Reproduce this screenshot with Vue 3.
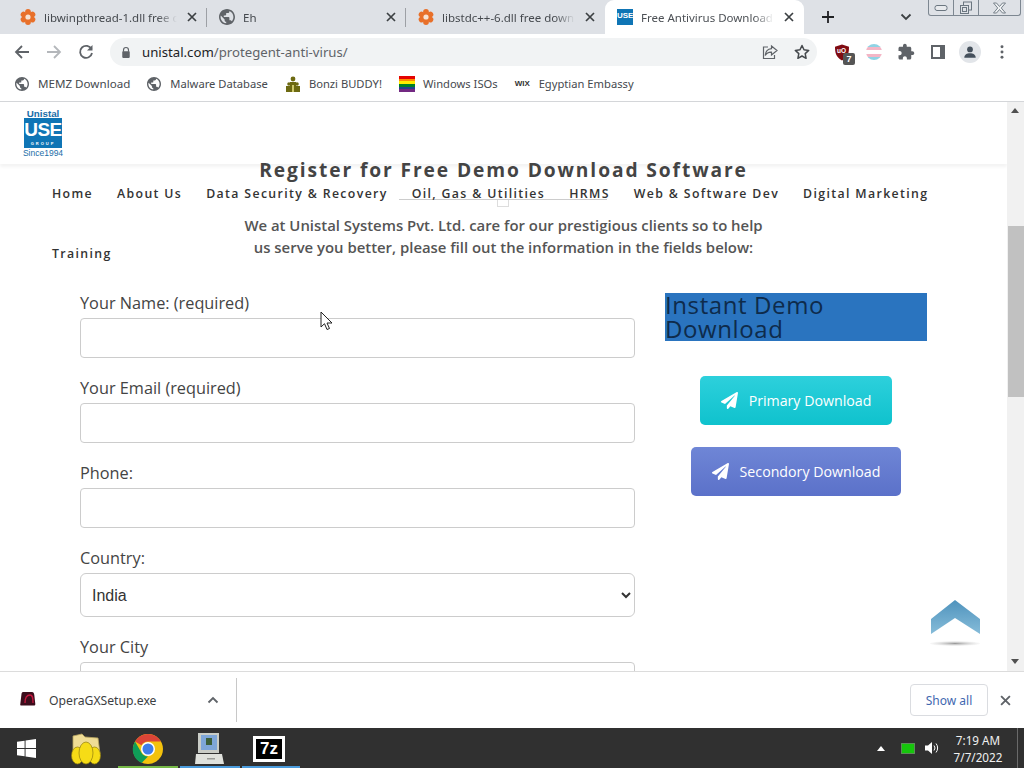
<script setup>
const globe = 'M12 2C6.48 2 2 6.48 2 12s4.48 10 10 10 10-4.48 10-10S17.52 2 12 2zm-1 17.93c-3.95-.49-7-3.85-7-7.93 0-.62.08-1.21.21-1.79L9 15v1c0 1.1.9 2 2 2v1.93zm6.9-2.54c-.26-.81-1-1.39-1.9-1.39h-1v-3c0-.55-.45-1-1-1H8v-2h2c.55 0 1-.45 1-1V7h2c1.1 0 2-.9 2-2v-.41c2.93 1.19 5 4.06 5 7.41 0 2.08-.8 3.97-2.1 5.39z'
const plane = 'M476 3.2L12.5 270.6c-18.1 10.4-15.8 35.6 2.2 43.2L121 358.4l287.3-253.2c5.5-4.9 13.3 2.6 8.6 8.3L176 407v80.5c0 23.6 28.5 32.9 42.5 15.8L282 426l124.6 52.2c14.2 6 30.4-2.9 33-18.2l72-432C515 7.8 493.3-6.8 476 3.2z'
const tabs = [
  { title: 'libwinpthread-1.dll free download', icon: 'dll' },
  { title: 'Eh', icon: 'globe' },
  { title: 'libstdc++-6.dll free download', icon: 'dll' },
  { title: 'Free Antivirus Download for PC', icon: 'use', active: true }
]
const petals = [0, 60, 120, 180, 240, 300]
const nav = ['Home', 'About Us', 'Data Security & Recovery', 'Oil, Gas & Utilities', 'HRMS', 'Web & Software Dev', 'Digital Marketing', 'Training']
const fields = [
  { label: 'Your Name: (required)' },
  { label: 'Your Email (required)' },
  { label: 'Phone:' }
]
</script>

<template>
  <div class="screen">
    <header class="tabstrip">
      <div v-for="t in tabs" :key="t.title" class="tab" :class="{ active: t.active }">
        <svg v-if="t.icon === 'dll'" class="fav" viewBox="0 0 16 16">
          <g fill="#e8702a">
            <circle v-for="a in petals" :key="a" cx="8" cy="2.9" r="2.9" :transform="`rotate(${a} 8 8)`" />
            <circle cx="8" cy="8" r="4.6" />
          </g>
          <circle cx="8" cy="8" r="2.6" fill="#f6e3d4" />
        </svg>
        <svg v-else-if="t.icon === 'globe'" class="fav" viewBox="2 2 20 20"><path :d="globe" fill="#5f6368" /></svg>
        <span v-else class="fav favuse">USE</span>
        <span class="tabtitle">{{ t.title }}</span>
        <svg class="tabx" viewBox="0 0 10 10"><path d="M1 1l8 8M9 1l-8 8" stroke="#3c4043" stroke-width="1.7" /></svg>
      </div>
      <svg class="newtab" viewBox="0 0 12 12"><path d="M6 0v12M0 6h12" stroke="#202124" stroke-width="1.8" /></svg>
      <svg class="tabmenu" viewBox="0 0 12 8"><path d="M1.5 1.5L6 6l4.500-4.500" fill="none" stroke="#3c4043" stroke-width="1.8" /></svg>
      <div class="winctl">
        <span class="winbtn"><svg viewBox="0 0 14 8" width="14" height="8"><rect x="1" y="1.500" width="12" height="5" rx="2" fill="#e8eaed" stroke="#6b7680" /></svg></span>
        <span class="winbtn"><svg viewBox="0 0 14 14" width="14" height="14"><rect x="4.500" y="1" width="8" height="8" fill="none" stroke="#6b7680" /><rect x="1.500" y="4.500" width="8" height="8" fill="#dee1e6" stroke="#6b7680" /><rect x="3.500" y="6.500" width="4" height="4" fill="none" stroke="#6b7680" /></svg></span>
        <span class="winbtn wide"><svg viewBox="0 0 14 12" width="15" height="12"><path d="M1 1h3l3 3.500L10 1h3L8.800 6 13 11h-3L7 7.500 4 11H1l4.200-5z" fill="#eef0f2" stroke="#6b7680" stroke-width=".9" /></svg></span>
      </div>
    </header>

    <div class="toolbar">
      <svg class="navicon" viewBox="0 0 16 16"><path d="M15 8H2M8 2L2 8l6 6" fill="none" stroke="#5f6368" stroke-width="1.800" /></svg>
      <svg class="navicon" viewBox="0 0 16 16"><path d="M1 8h13M8 2l6 6-6 6" fill="none" stroke="#b4b7bb" stroke-width="1.800" /></svg>
      <svg class="navicon" viewBox="0 0 16 16"><path d="M13.500 5.200A6 6 0 1 0 14 9" fill="none" stroke="#5f6368" stroke-width="1.800" /><path d="M14.500 1v5.500H9z" fill="#5f6368" /></svg>
      <div class="omnibox">
        <svg class="lock" viewBox="0 0 12 14"><path d="M3 6V4a3 3 0 0 1 6 0v2" fill="none" stroke="#5f6368" stroke-width="1.400" /><rect x="1.500" y="5.500" width="9" height="8" rx="1" fill="#5f6368" /></svg>
        <span class="url"><b>unistal.com</b>/protegent-anti-virus/</span>
        <svg class="omni-i share" viewBox="0 0 16 16"><path d="M9.500 2l5.500 4.500L9.500 11V8.200C6.500 8 4.500 9.300 3.200 11.500 3.500 7.500 5.500 5 9.500 4.600z" fill="none" stroke="#5f6368" stroke-width="1.200" /><path d="M6 3H1.500v11.500h11V11" fill="none" stroke="#5f6368" stroke-width="1.200" /></svg>
        <svg class="omni-i star" viewBox="0 0 16 16"><path d="M8 1.500l2 4.300 4.700.6-3.500 3.200.9 4.700L8 12l-4.100 2.300.9-4.700L1.300 6.400 6 5.800z" fill="none" stroke="#45494d" stroke-width="1.500" stroke-linejoin="round" /></svg>
      </div>
      <div class="ext">
        <div class="ublock">
          <svg viewBox="0 0 16 17" width="16" height="17"><path d="M8 .5l7 2.200c0 6-1 10.500-7 13.800C2 13.200 1 8.700 1 2.700z" fill="#800b12" /></svg>
          <span class="uo">uO</span>
          <span class="ubadge">7</span>
        </div>
      </div>
      <div class="ext gap"><span class="trans"></span></div>
      <div class="ext"><svg viewBox="0 0 24 24" width="18" height="18"><path d="M20.500 11H19V7c0-1.100-.9-2-2-2h-4V3.500C13 2.120 11.880 1 10.500 1S8 2.120 8 3.500V5H4c-1.100 0-1.990.9-1.990 2v3.800H3.500c1.490 0 2.700 1.210 2.700 2.700s-1.210 2.700-2.700 2.700H2V20c0 1.100.9 2 2 2h3.800v-1.500c0-1.490 1.210-2.700 2.700-2.700 1.490 0 2.700 1.210 2.700 2.700V22H17c1.100 0 2-.9 2-2v-4h1.500c1.380 0 2.500-1.120 2.500-2.500S21.880 11 20.500 11z" fill="#5f6368" /></svg></div>
      <div class="ext"><span class="sidepanel"></span></div>
      <div class="ext">
        <span class="avatar"><svg viewBox="0 0 16 16" width="14" height="14"><circle cx="8" cy="5" r="3.300" fill="#45505c" /><path d="M1.500 14.500c0-3.500 3-5 6.500-5s6.500 1.500 6.500 5z" fill="#45505c" /></svg></span>
      </div>
      <div class="ext"><svg viewBox="0 0 4 16" width="4" height="14"><g fill="#5f6368"><circle cx="2" cy="2" r="1.700" /><circle cx="2" cy="8" r="1.700" /><circle cx="2" cy="14" r="1.700" /></g></svg></div>
    </div>

    <nav class="bookmarks">
      <span class="bm"><svg class="bmi" viewBox="2 2 20 20"><path :d="globe" fill="#5f6368" /></svg>MEMZ Download</span>
      <span class="bm"><svg class="bmi" viewBox="2 2 20 20"><path :d="globe" fill="#5f6368" /></svg>Malware Database</span>
      <span class="bm">
        <svg class="bmi big" viewBox="0 0 16 16"><g fill="#6d6a12"><circle cx="8" cy="3" r="2.400" /><path d="M5 6h6v4H5z" /><circle cx="4" cy="8" r="1.800" /><circle cx="12" cy="8" r="1.800" /><path d="M1 10h6v6H1zM9 10h6v6H9z" /></g><path d="M7 9h2v7H7z" fill="#cfc96a" /></svg>
        Bonzi BUDDY!
      </span>
      <span class="bm"><span class="rainbow"></span>Windows ISOs</span>
      <span class="bm"><span class="wix">WIX</span>Egyptian Embassy</span>
    </nav>

    <div class="viewport">
      <main class="page">
        <div class="site-head">
          <div class="logo">
            <span class="logo-top">Unistal</span>
            <div class="logo-box">
              <span class="logo-use">USE</span>
              <span class="logo-group">GROUP</span>
            </div>
            <span class="logo-since">Since1994</span>
          </div>
        </div>

        <div class="site-nav">
          <a v-for="n in nav" :key="n">{{ n }}</a>
        </div>
        <div class="navline"><span class="navbox"></span></div>

        <section class="content">
          <h1>Register for Free Demo Download Software</h1>
          <p class="intro">We at Unistal Systems Pvt. Ltd. care for our prestigious clients so to help<br />us serve you better, please fill out the information in the fields below:</p>
          <div class="columns">
            <form class="form" @submit.prevent>
              <label v-for="f in fields" :key="f.label" class="group">
                <span>{{ f.label }}</span>
                <input type="text" />
              </label>
              <label class="group">
                <span>Country:</span>
                <select><option>India</option></select>
              </label>
              <label class="group">
                <span>Your City</span>
                <input type="text" />
              </label>
            </form>
            <aside class="side">
              <h2>Instant Demo Download</h2>
              <a class="btn primary"><svg viewBox="0 0 512 512"><path :d="plane" fill="#fff" /></svg>Primary Download</a>
              <a class="btn secondary"><svg viewBox="0 0 512 512"><path :d="plane" fill="#fff" /></svg>Secondory Download</a>
            </aside>
          </div>
        </section>

        <div class="totop">
          <svg viewBox="0 0 50 46" width="50" height="46">
            <defs>
              <linearGradient id="tg" x1="0" y1="0" x2="0" y2="1"><stop offset="0" stop-color="#4f93bd" /><stop offset="1" stop-color="#86bcd9" /></linearGradient>
              <radialGradient id="ts"><stop offset="0" stop-color="#999" /><stop offset="1" stop-color="#ddd" stop-opacity=".2" /></radialGradient>
            </defs>
            <path d="M25 0L50 19v15L25 18 1 34V19z" fill="url(#tg)" />
            <ellipse cx="25" cy="43.500" rx="25" ry="2.500" fill="url(#ts)" />
          </svg>
        </div>

        <svg class="cursor" viewBox="0 0 13 20" width="13" height="20"><path d="M1 1v15l3.500-3.300L7 18.500l2.500-1-2.500-5.500h5z" fill="#fff" stroke="#222" stroke-width="1" /></svg>
      </main>
      <div class="scrollbar">
        <span class="arrow up"></span>
        <span class="thumb"></span>
        <span class="arrow down"></span>
      </div>
    </div>

    <div class="downloads">
      <svg class="gx" viewBox="0 0 16 16"><path d="M3 2h9c1.500 0 2 1 2.300 3l1 9c0 1-.5 1.500-1.500 1.500H1.500C.5 15.500 0 15 .3 14l1.200-10C1.700 3 2 2 3 2z" fill="#3c0d1c" /><path d="M5 13c0-5 2-8 5-8s3 4 3 8" fill="none" stroke="#c8173f" stroke-width="1.300" /></svg>
      <span class="fname">OperaGXSetup.exe</span>
      <svg class="dchev" viewBox="0 0 12 8"><path d="M1.500 6.500L6 2l4.500 4.500" fill="none" stroke="#5f6368" stroke-width="1.800" /></svg>
      <span class="dsep"></span>
      <button class="showall">Show all</button>
      <svg class="dclose" viewBox="0 0 10 10"><path d="M1 1l8 8M9 1l-8 8" stroke="#5f6368" stroke-width="1.700" /></svg>
    </div>

    <footer class="taskbar">
      <svg class="win" viewBox="0 0 20 20"><path d="M0 3l8-1.200V9.500H0zM9 1.700L20 0v9.500H9zM0 10.500h8v7.700L0 17zM9 10.500h11V20L9 18.300z" fill="#fff" /></svg>
      <div class="task t-folder">
        <svg viewBox="0 0 32 32" width="32" height="32">
          <path d="M3 3l9-2 3 3 13 1 2 16H3z" fill="#efdc95" stroke="#b8a45e" stroke-width=".8" />
          <g fill="#f6dc16" stroke="#8f7d10" stroke-width=".7"><ellipse cx="7.500" cy="22.500" rx="6" ry="8.500" /><ellipse cx="24.500" cy="22.500" rx="6" ry="8.500" /><ellipse cx="16" cy="20" rx="7" ry="11" /></g>
        </svg>
      </div>
      <div class="task t-chrome">
        <svg viewBox="0 0 32 32" width="32" height="32">
          <circle cx="16" cy="16" r="15" fill="#f4c20d" />
          <path d="M16 1a15 15 0 0 1 13 7.500H16a7.500 7.500 0 0 0-6.500 3.750L3 8.500A15 15 0 0 1 16 1z" fill="#db4437" />
          <path d="M3 8.500l6.500 11.250A7.500 7.500 0 0 0 16 23.500L9.500 30A15 15 0 0 1 3 8.500z" fill="#0f9d58" />
          <circle cx="16" cy="16" r="7" fill="#fff" /><circle cx="16" cy="16" r="5.500" fill="#3f7de8" />
        </svg>
      </div>
      <div class="task t-pc">
        <svg viewBox="0 0 30 34" width="30" height="34">
          <rect x="3" y="1" width="21" height="20" fill="#c9ccc6" /><rect x="6" y="3" width="16" height="15" fill="#7ea6d8" />
          <rect x="11" y="6" width="6" height="7" fill="#3c5f3a" />
          <path d="M1 22h26l2 10H0z" fill="#dfe1dc" /><rect x="12" y="26" width="8" height="1.500" fill="#9a9c98" />
        </svg>
      </div>
      <div class="task t-7z"><span class="sevenz">7z</span></div>
      <div class="tray">
        <svg class="caret" viewBox="0 0 8 5"><path d="M4 0l4 5H0z" fill="#fff" /></svg>
        <span class="monitor"></span>
        <svg class="speaker" viewBox="0 0 16 16"><path d="M1 5.500h3L8 2v12L4 10.500H1z" fill="#fff" /><path d="M10 5.500a4 4 0 0 1 0 5M12 3.500a7 7 0 0 1 0 9" fill="none" stroke="#fff" stroke-width="1" /></svg>
        <div class="clock"><span>7:19 AM</span><span>7/7/2022</span></div>
        <span class="showdesk"></span>
      </div>
    </footer>
  </div>
</template>

<style>
html, body { margin: 0; padding: 0; background: #fff; overflow: hidden; }
</style>

<style scoped>
.screen { width: 1024px; height: 768px; display: flex; flex-direction: column; overflow: hidden; font-family: "Open Sans", sans-serif; background: #fff; }

/* tab strip */
.tabstrip { height: 34px; flex: none; display: flex; align-items: stretch; background: #dee1e6; padding-left: 8px; }
.tab { width: 199px; flex: none; box-sizing: border-box; display: flex; align-items: center; padding: 0 7px 0 12px; position: relative; font: 11.500px "Noto Sans", sans-serif; color: #45494e; }
.tab:not(.active)::after { content: ""; position: absolute; right: 0; top: 8px; height: 19px; width: 1px; background: #9da0a5; }
.tab:nth-child(3)::after { display: none; }
.tab.active { background: #fff; border-radius: 9px 9px 0 0; color: #4c5055; }
.fav { width: 16px; height: 16px; flex: none; }
.favuse { background: #0f75b5; color: #fff; font: bold 8px/14px "Liberation Sans", sans-serif; text-align: center; overflow: hidden; }
.tabtitle { margin-left: 8px; flex: 1; min-width: 0; white-space: nowrap; overflow: hidden; -webkit-mask-image: linear-gradient(to right, #000 85%, transparent); mask-image: linear-gradient(to right, #000 85%, transparent); }
.tabx { width: 10px; height: 10px; flex: none; margin: 0 3px 0 10px; }
.newtab { width: 12px; height: 12px; margin: 11px 0 0 18px; flex: none; }
.tabmenu { width: 12px; height: 8px; margin: 13px 0 0 66px; flex: none; }
.winctl { display: flex; height: 16px; margin-left: 16px; box-sizing: border-box; border: 1px solid #7d8791; border-top: 0; border-radius: 0 0 3px 3px; }
.winbtn { width: 24px; display: flex; align-items: center; justify-content: center; border-right: 1px solid #7d8791; }
.winbtn.wide { width: 41px; border-right: 0; }

/* toolbar */
.toolbar { height: 34px; flex: none; box-sizing: border-box; display: flex; align-items: center; background: #fff; padding: 2px 0 0 14px; }
.navicon { width: 16px; height: 16px; flex: none; margin-right: 16px; }
.omnibox { width: 707px; height: 28px; flex: none; display: flex; align-items: center; background: #f1f3f4; border-radius: 14px; box-sizing: border-box; padding-left: 11px; }
.lock { width: 10px; height: 13px; flex: none; }
.url { margin-left: 11px; font: 13.200px "Noto Sans", sans-serif; color: #5f6368; flex: 1; }
.url b { font-weight: 400; color: #202124; }
.omni-i { width: 16px; height: 16px; flex: none; }
.share { margin-right: 16px; }
.star { margin-right: 7px; }
.ext { width: 32px; height: 32px; flex: none; display: flex; align-items: center; justify-content: center; }
.ext.gap { margin-left: 9px; }
.ublock { position: relative; width: 16px; height: 17px; margin-left: 18px; }
.uo { position: absolute; left: 3px; top: 2px; font: bold 6.500px/10px "Liberation Sans", sans-serif; color: #fff; }
.ubadge { position: absolute; left: 9px; top: 9px; width: 12px; height: 12px; background: #555; border-radius: 2px; color: #fff; font: bold 9px/12px "Liberation Sans", sans-serif; text-align: center; }
.trans { width: 16px; height: 16px; border-radius: 50%; background: linear-gradient(#8fd3e4 0 20%, #f3b6c6 20% 40%, #fff 40% 60%, #f3b6c6 60% 80%, #8fd3e4 80%); }
.sidepanel { width: 14px; height: 14px; box-sizing: border-box; border: 2px solid #5f6368; border-right-width: 5px; background: #fff; }
.avatar { width: 22px; height: 22px; border-radius: 50%; background: #e2e5e9; display: flex; align-items: center; justify-content: center; }

/* bookmarks */
.bookmarks { height: 34px; flex: none; box-sizing: border-box; display: flex; align-items: center; gap: 17px; padding: 0 0 2px 15px; background: #fff; border-bottom: 1px solid #d4d6d9; font: 11.200px "Noto Sans", sans-serif; color: #45494e; }
.bm { display: flex; align-items: center; white-space: nowrap; }
.bm:first-child { font-size: 11.600px; }
.bmi { width: 14px; height: 14px; margin-right: 9px; flex: none; }
.bmi.big { width: 16px; height: 16px; margin-right: 8px; }
.rainbow { width: 16px; height: 16px; margin-right: 8px; background: linear-gradient(#e40303 0 17%, #ff8c00 17% 34%, #ffed00 34% 50%, #008026 50% 67%, #24408e 67% 84%, #732982 84%); }
.wix { width: 16px; margin-right: 8px; font: 900 8px "Liberation Sans", sans-serif; color: #333; }

/* page */
.viewport { flex: 1; min-height: 0; display: flex; overflow: hidden; }
.page { flex: 1; min-width: 0; position: relative; overflow: hidden; color: #444; }
.site-head { position: absolute; left: 0; right: 0; top: 0; height: 62px; padding: 7px 0 0 24px; box-sizing: border-box; background: #fff; box-shadow: 0 3px 3px #f4f4f4; }
.logo { width: 38px; display: flex; flex-direction: column; align-items: center; color: #1a6ea8; }
.logo-top { font: bold 9.800px/9px "Liberation Sans", sans-serif; }
.logo-box { width: 38px; height: 30px; background: #0f75b5; color: #fff; display: flex; flex-direction: column; align-items: center; }
.logo-use { font: bold 19px/23px "Liberation Sans", sans-serif; letter-spacing: -.5px; }
.logo-group { font: bold 4px/5px "Liberation Sans", sans-serif; letter-spacing: 2px; }
.logo-since { font: 8.500px/10px "Liberation Sans", sans-serif; white-space: nowrap; }
.site-nav { position: absolute; z-index: 2; left: 52px; top: 62px; width: 890px; display: flex; flex-wrap: wrap; column-gap: 24px; }
.site-nav a { font-size: 12.300px; font-weight: 600; letter-spacing: 1.360px; line-height: 60px; color: #333; white-space: nowrap; }
.navline { position: absolute; z-index: 1; left: 399px; top: 97px; width: 208px; height: 0; border-top: 1px solid #ccc; }
.navbox { position: absolute; left: 98px; top: 0; width: 10px; height: 6px; border: 1px solid #ddd; border-top: 0; }
.content { position: relative; padding-top: 54px; text-align: center; }
h1 { margin: 0; font-size: 19.200px; line-height: 28px; font-weight: 700; letter-spacing: 1.900px; color: #444; position: relative; z-index: 1; }
.intro { margin: 30px 0 0; font-size: 14.900px; line-height: 22px; font-weight: 600; color: #555; }
.columns { display: flex; text-align: left; padding: 35px 0 0 80px; gap: 30px; align-items: flex-start; }
.form { width: 555px; flex: none; }
.group { display: block; margin-bottom: 20px; }
.group span { display: block; font-size: 16.300px; line-height: 20px; margin-bottom: 5px; color: #444; }
input, select { display: block; width: 100%; box-sizing: border-box; border: 1px solid #ccc; background: #fff; outline: none; }
input { height: 40px; border-radius: 4px; }
select { height: 44px; border-radius: 6px; padding-left: 7px; font: 16px "Liberation Sans", sans-serif; color: #333; }
.side { width: 262px; flex: none; display: flex; flex-direction: column; align-items: center; }
h2 { margin: 0 0 35px; align-self: stretch; background: #2a74bf; font-size: 24px; line-height: 24px; font-weight: 500; letter-spacing: .6px; color: #0e2b4b; }
.btn { height: 49px; box-sizing: border-box; display: flex; align-items: center; padding: 0 21px; gap: 11px; border-radius: 5px; color: #fff; font-size: 14.200px; font-weight: 500; white-space: nowrap; }
.btn svg { width: 17px; height: 17px; flex: none; }
.primary { background: linear-gradient(#2dd0dc, #0fc2cd); margin-bottom: 22px; }
.secondary { background: linear-gradient(#6f86d6, #5b71c9); }
.totop { position: absolute; left: 930px; top: 498px; }
.cursor { position: absolute; left: 320px; top: 209px; }

/* scrollbar */
.scrollbar { width: 17px; flex: none; position: relative; background: #f1f1f1; }
.thumb { position: absolute; left: 1px; right: 0; top: 124px; height: 171px; background: #c1c1c1; }
.arrow { position: absolute; left: 4px; width: 0; height: 0; border-left: 4.500px solid transparent; border-right: 4.500px solid transparent; }
.arrow.up { top: 6px; border-bottom: 5px solid #505050; }
.arrow.down { bottom: 7px; border-top: 5px solid #505050; }

/* downloads bar */
.downloads { height: 57px; flex: none; box-sizing: border-box; display: flex; align-items: center; background: #fff; border-top: 1px solid #dcdcdc; padding-left: 20px; }
.gx { width: 16px; height: 16px; flex: none; margin: -4px 0 0; }
.fname { margin-left: 13px; font: 12.200px "Noto Sans", sans-serif; color: #3c4043; width: 158px; white-space: nowrap; }
.dchev { width: 12px; height: 8px; flex: none; }
.dsep { width: 1px; height: 44px; background: #c8c8c8; margin-left: 17px; flex: none; }
.showall { margin-left: 673px; width: 78px; height: 32px; flex: none; box-sizing: border-box; background: #fff; border: 1px solid #dadce0; border-radius: 4px; font: 12px "Noto Sans", sans-serif; color: #3f68b0; padding: 0; }
.dclose { width: 11px; height: 11px; flex: none; margin-left: 12px; }

/* taskbar */
.taskbar { height: 40px; flex: none; display: flex; align-items: center; background: #303030; padding-left: 17px; position: relative; }
.win { width: 19px; height: 19px; flex: none; }
.task { flex: none; height: 40px; display: flex; align-items: center; justify-content: center; box-sizing: border-box; border-bottom: 2px solid transparent; padding-top: 4px; }
.t-folder { width: 62px; margin-left: 19px; }
.t-chrome { width: 60px; border-bottom-color: #76b947; margin-left: 1px; }
.t-pc { width: 60px; border-bottom-color: #4a9bdc; margin-left: 2px; }
.t-7z { width: 58px; border-bottom-color: #4a9bdc; margin-left: 2px; padding-right: 4px; }
.sevenz { width: 32px; height: 26px; box-sizing: border-box; background: #000; border: 3px solid #fff; color: #fff; font: 900 17px/19px "Liberation Sans", sans-serif; text-align: center; }
.tray { margin-left: auto; display: flex; align-items: center; height: 40px; color: #fff; }
.caret { width: 8px; height: 5px; flex: none; }
.monitor { width: 14px; height: 11px; margin-left: 16px; background: #16c60c; border: 1px solid #5c8f58; box-sizing: border-box; }
.speaker { width: 16px; height: 16px; margin-left: 9px; flex: none; }
.clock { width: 78px; margin-left: -1px; padding-top: 2px; display: flex; flex-direction: column; align-items: center; font: 11.700px/17px "Noto Sans", sans-serif; color: #f0f0f0; }
.showdesk { width: 1px; height: 40px; background: #6a6a6a; margin-right: 6px; }
</style>
